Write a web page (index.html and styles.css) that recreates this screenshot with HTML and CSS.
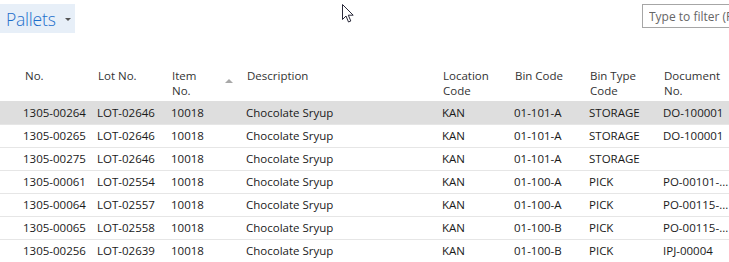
FILE: index.html
```html
<!DOCTYPE html>
<html lang="en">
<head>
    <meta charset="UTF-8">
    <title>Pallets</title>
    <link rel="stylesheet" href="styles.css">
</head>
<body>
    <div class="topbar">
        <div class="page-title">
            <span class="title-text">Pallets</span>
            <span class="caret"></span>
        </div>
        <div class="filter">
            <input type="text" placeholder="Type to filter (F3)">
        </div>
    </div>

    <svg class="pointer" width="13" height="20" viewBox="0 0 13 20">
        <path d="M0.5 0.5 L0.5 15.5 L4 12 L6.5 18 L8.8 17 L6.3 11.2 L11.2 11.2 Z" fill="#fff" stroke="#2a2a3a" stroke-width="1"/>
    </svg>

    <table class="grid">
        <colgroup>
            <col style="width:95px">
            <col style="width:74px">
            <col style="width:75px">
            <col style="width:196px">
            <col style="width:72px">
            <col style="width:75px">
            <col style="width:74px">
            <col style="width:68px">
        </colgroup>
        <thead>
            <tr>
                <th class="first">No.</th>
                <th>Lot No.</th>
                <th class="sorted">Item<br>No.<span class="sort-arrow"></span></th>
                <th>Description</th>
                <th>Location<br>Code</th>
                <th>Bin Code</th>
                <th>Bin Type<br>Code</th>
                <th>Document<br>No.</th>
            </tr>
        </thead>
        <tbody>
            <tr class="selected">
                <td class="first">1305-00264</td><td>LOT-02646</td><td>10018</td><td>Chocolate Sryup</td><td>KAN</td><td>01-101-A</td><td>STORAGE</td><td>DO-100001</td>
            </tr>
            <tr>
                <td class="first">1305-00265</td><td>LOT-02646</td><td>10018</td><td>Chocolate Sryup</td><td>KAN</td><td>01-101-A</td><td>STORAGE</td><td>DO-100001</td>
            </tr>
            <tr>
                <td class="first">1305-00275</td><td>LOT-02646</td><td>10018</td><td>Chocolate Sryup</td><td>KAN</td><td>01-101-A</td><td>STORAGE</td><td></td>
            </tr>
            <tr>
                <td class="first">1305-00061</td><td>LOT-02554</td><td>10018</td><td>Chocolate Sryup</td><td>KAN</td><td>01-100-A</td><td>PICK</td><td>PO-00101-...</td>
            </tr>
            <tr>
                <td class="first">1305-00064</td><td>LOT-02557</td><td>10018</td><td>Chocolate Sryup</td><td>KAN</td><td>01-100-A</td><td>PICK</td><td>PO-00115-...</td>
            </tr>
            <tr>
                <td class="first">1305-00065</td><td>LOT-02558</td><td>10018</td><td>Chocolate Sryup</td><td>KAN</td><td>01-100-B</td><td>PICK</td><td>PO-00115-...</td>
            </tr>
            <tr>
                <td class="first">1305-00256</td><td>LOT-02639</td><td>10018</td><td>Chocolate Sryup</td><td>KAN</td><td>01-100-B</td><td>PICK</td><td>IPJ-00004</td>
            </tr>
        </tbody>
    </table>
</body>
</html>
```

FILE: styles.css
```css
:root {
    --title-blue: #1c6ecb;
    --title-bg: #e7eff8;
    --text: #1a1a1a;
    --header-text: #333333;
    --row-line: #e6e6e6;
    --selected: #dedede;
}

* {
    margin: 0;
    padding: 0;
    box-sizing: border-box;
}

body {
    font-family: 'Open Sans', 'Noto Sans', sans-serif;
    font-size: 11.5px;
    color: var(--text);
    background: #fff;
    width: 729px;
    height: 262px;
    overflow: hidden;
    position: relative;
}

.topbar {
    display: flex;
    justify-content: space-between;
    align-items: flex-start;
    padding-top: 4px;
    height: 68px;
}

.page-title {
    display: flex;
    align-items: center;
    gap: 9px;
    height: 29px;
    width: 75px;
    padding-left: 6px;
    background: var(--title-bg);
}

.title-text {
    font-family: 'Open Sans', sans-serif;
    font-weight: 300;
    font-size: 17.5px;
    color: var(--title-blue);
    letter-spacing: -0.2px;
}

.caret {
    width: 0;
    height: 0;
    border-left: 3px solid transparent;
    border-right: 3px solid transparent;
    border-top: 3px solid #555;
    margin-top: 1px;
}

.filter {
    width: 100px;
    margin-right: -13px;
}

.filter input {
    width: 100%;
    height: 24px;
    border: 1px solid #a6a6a6;
    padding-left: 6px;
    font-family: 'Open Sans', sans-serif;
    font-size: 12px;
    outline: none;
}

.filter input::placeholder {
    color: #666;
}

.pointer {
    position: absolute;
    left: 342px;
    top: 4px;
}

.grid {
    border-collapse: collapse;
    table-layout: fixed;
    width: 729px;
}

.grid th {
    text-align: left;
    font-weight: 400;
    color: var(--header-text);
    vertical-align: top;
    line-height: 15px;
    height: 33px;
    padding-left: 3px;
    white-space: nowrap;
}

.grid th.sorted {
    position: relative;
}

.sort-arrow {
    position: absolute;
    left: 56px;
    top: 11px;
    width: 0;
    height: 0;
    border-left: 4px solid transparent;
    border-right: 4px solid transparent;
    border-bottom: 4px solid #a8a8a8;
}

.grid td {
    height: 23px;
    padding-left: 2px;
    border-bottom: 1px solid var(--row-line);
    white-space: nowrap;
    overflow: hidden;
}

.grid .first {
    padding-left: 23px;
}

.grid th.first {
    padding-left: 25px;
}

.grid tr.selected td {
    background: var(--selected);
}
```
